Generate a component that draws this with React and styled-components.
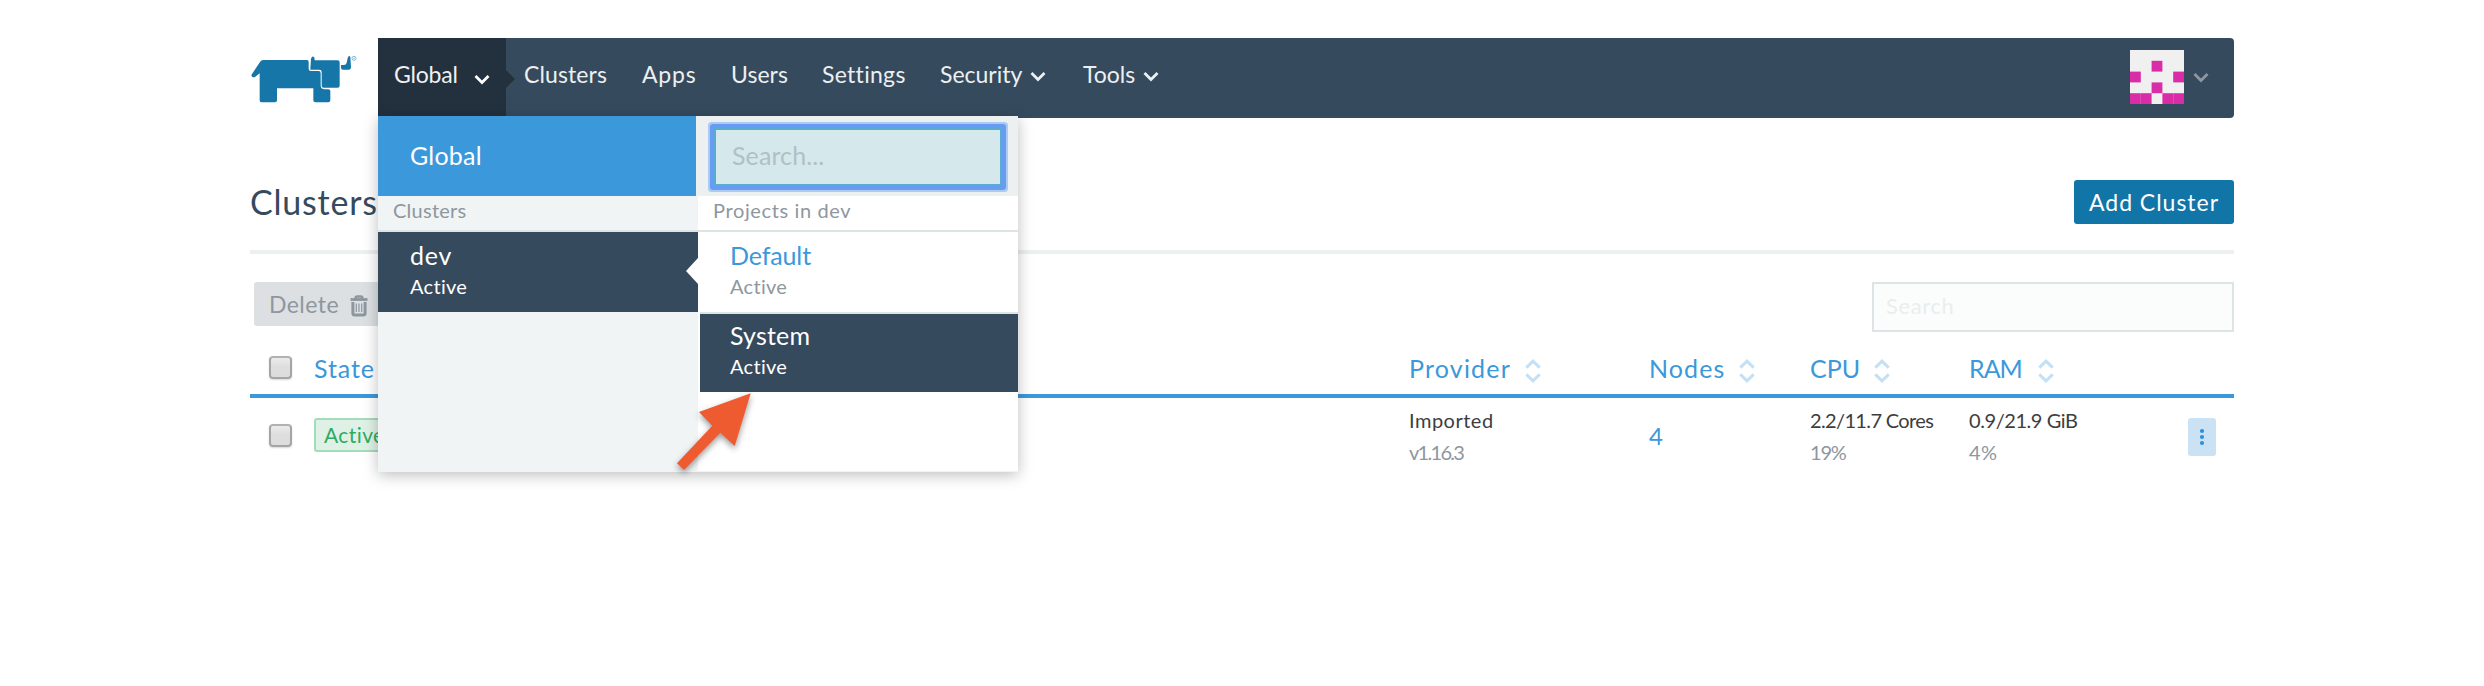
import React from 'react';
import styled, { createGlobalStyle } from 'styled-components';

const c = {
  navy: '#364a5e', navyDark: '#23303d', blue: '#3b98da', primary: '#1175a7',
  muted: '#8e979e', border: '#dce4e5', panel: '#f0f4f5', soft: '#ecf0f1', nav: '#ecf0f0',
};

const GlobalStyle = createGlobalStyle`
  * { box-sizing: border-box; }
  body { margin: 0; background: #fff; font-family: Lato, "Liberation Sans", sans-serif; overflow: hidden; }
`;

const Page = styled.div`
  width: 2484px;
  height: 686px;
  padding: 38px 250px 0;
`;

const Txt = styled.span`
  display: block;
  white-space: nowrap;
  font-size: ${p => p.$s}px;
  line-height: ${p => p.$lh || 32}px;
  letter-spacing: ${p => p.$ls || 0}px;
  color: ${p => p.$c || 'inherit'};
`;

const Header = styled.header`
  display: flex;
  height: 80px;
`;

const Logo = styled.div`
  width: 128px;
  padding-top: 12px;
  svg { display: block; margin-left: -4px; }
`;

const Bar = styled.nav`
  position: relative;
  flex: 1;
  display: flex;
  background: ${c.navy};
  border-radius: 0 4px 4px 0;
  color: ${c.nav};
`;

const Scope = styled.div`
  position: relative;
  display: flex;
  align-items: center;
  width: 128px;
  padding: 0 0 8px 16px;
  background: ${c.navyDark};
  color: #eef1f2;
  svg { margin: 11px 0 0 16px; }
  &::after {
    content: '';
    position: absolute;
    left: 128px;
    top: 32px;
    border: solid transparent;
    border-width: 9px 0 9px 9px;
    border-left-color: ${c.navyDark};
  }
`;

const NavItem = styled.div`
  display: flex;
  align-items: center;
  width: ${p => p.$w}px;
  padding-bottom: 8px;
  svg { margin: 5px 0 0 8px; }
`;

const NavItems = styled.div`
  display: flex;
  padding-left: 18px;
`;

const Account = styled.div`
  display: flex;
  align-items: center;
  margin-left: auto;
  padding: 0 25px 2px 0;
  gap: 9px;
  svg { display: block; }
`;

const Dropdown = styled.div`
  position: absolute;
  z-index: 5;
  top: 78px;
  left: 0;
  display: flex;
  width: 640px;
  height: 356px;
  background: ${c.panel};
  box-shadow: 0 3px 14px rgba(0, 0, 0, 0.26);
`;

const Column = styled.div`
  width: 320px;
  height: ${p => p.$h}px;
  background: ${p => p.$bg};
`;

const ScopeGlobal = styled.div`
  height: 80px;
  padding: 25px 0 0 32px;
  background: ${c.blue};
  color: #fff;
  border-right: 2px solid ${c.soft};
`;

const GroupLabel = styled.div`
  height: 36px;
  padding: 0 0 0 15px;
  border-bottom: 2px solid ${c.border};
  color: ${c.muted};
`;

const Entry = styled.div`
  position: relative;
  height: 80px;
  padding: 7px 0 0 32px;
  background: ${p => (p.$active ? c.navy : 'transparent')};
  color: ${p => (p.$active ? '#fff' : c.blue)};
`;

const ProjectEntry = styled(Entry)`
  ${p => p.$active && `
    margin-left: 2px;
    padding: 5px 0 0 30px;
    border-top: 2px solid ${c.border};
  `}
`;

const Pointer = styled.i`
  position: absolute;
  right: 0;
  top: 26px;
  border: solid transparent;
  border-width: 13px 12px 13px 0;
  border-right-color: #fff;
`;

const SearchWrap = styled.div`
  height: 80px;
  padding: 12px 16px 10px;
  background: ${c.soft};
`;

const ScopeSearch = styled.div`
  height: 58px;
  padding: 8px 0 0 16px;
  border: 2px solid #59abd1;
  background: #d5e8eb;
  color: #b1c0c5;
  box-shadow: 0 0 0 4px #669df3, 0 0 0 6px #adcbf1;
  border-radius: 1px;
`;

const Annotation = styled.svg`
  position: absolute;
  left: 282px;
  top: 268px;
  filter: drop-shadow(0 3px 3px rgba(0, 0, 0, 0.4));
`;

const TitleRow = styled.div`
  display: flex;
  justify-content: space-between;
  height: 136px;
  padding-top: 62px;
  border-bottom: 4px solid #ecf0f1;
  color: ${c.navy};
`;

const Button = styled.button`
  display: flex;
  align-items: center;
  height: 44px;
  padding: 0 15px;
  border: 0;
  border-radius: 3px;
  font-family: inherit;
  background: ${p => (p.$disabled ? '#dce0e3' : c.primary)};
  color: ${p => (p.$disabled ? c.muted : '#fff')};
  svg { margin: 3px 0 0 11px; }
`;

const Toolbar = styled.div`
  display: flex;
  justify-content: space-between;
  padding: 28px 0 0 4px;
`;

const TableSearch = styled.div`
  width: 362px;
  height: 50px;
  padding: 6px 0 0 12px;
  border: 2px solid ${c.border};
  background: #fbfdfc;
  color: #e9edee;
`;

const Row = styled.div`
  display: grid;
  grid-template-columns: 64px 1095px 240px 161px 159px 219px 46px;
  align-items: center;
  height: 76px;
`;

const HeadRow = styled(Row)`
  height: 66px;
  padding-top: 9px;
  border-bottom: 4px solid ${c.blue};
  color: ${c.blue};
`;

const HeadCell = styled.div`
  display: flex;
  align-items: center;
  svg { margin: 6px 0 0 ${p => p.$gap || 14}px; }
`;

const Checkbox = styled.div`
  width: 23px;
  height: 23px;
  margin: 0 0 1px 19px;
  border: 2px solid #a5a5a5;
  border-top-color: #b2b2b2;
  border-radius: 4px;
  background: linear-gradient(#ebebeb, #dedede 45%, #dcdcdc);
  box-shadow: 0 1px 2px rgba(0, 0, 0, 0.16);
`;

const Badge = styled.div`
  width: 82px;
  height: 34px;
  margin-bottom: 2px;
  padding-left: 8px;
  border: 2px solid #a3dcb9;
  border-radius: 3px;
  background: #dff1e6;
  color: #2fab60;
`;

const Kebab = styled.div`
  display: flex;
  justify-content: center;
  align-items: center;
  width: 28px;
  height: 38px;
  margin-top: 2px;
  border-radius: 3px;
  background: #cbe2f5;
`;

const NodeCount = styled.a`
  padding-bottom: 1px;
  color: ${c.blue};
`;

const Chevron = ({ color = c.nav }) => (
  <svg width="16" height="11" viewBox="0 0 16 11">
    <path d="M1.500 2 8 8.500 14.500 2" fill="none" stroke={color} strokeWidth="2.800" />
  </svg>
);

const SortIcon = () => (
  <svg width="16" height="24" viewBox="0 0 16 24">
    <path d="M1.300 8.700 8 2.200l6.700 6.500M1.300 15.300 8 21.800l6.700-6.500" fill="none" stroke="#c4e0f5" strokeWidth="3" />
  </svg>
);

const Trash = () => (
  <svg width="18" height="22" viewBox="0 0 18 22" fill="none" stroke={c.muted}>
    <path d="M0.500 4.500h17" strokeWidth="2.800" />
    <path d="M5.700 4V2.900q0-1.400 1.400-1.400h3.800q1.400 0 1.400 1.400V4" strokeWidth="2.600" />
    <path d="M2.900 7v11.300q0 1.800 1.800 1.800h8.600q1.800 0 1.800-1.800V7" strokeWidth="3" />
    <path d="M6.300 8.500v8.500M9 8.500v8.500M11.700 8.500v8.500" strokeWidth="1.200" />
  </svg>
);

const Steer = () => (
  <svg width="112" height="60" viewBox="0 0 336 180">
    <g fill="#1776a8">
      <path d="M16 75 42 36q4-6 10-6H183q5 0 5 6V56q0 7 7 7H218q6 0 6 6V106q0 12 12 12H247q6 0 6 5V151q0 6-6 6H208q-6 0-6-6V115H93V151q0 6-6 6H46q-5 0-5-6V70L28 80Q22 84 18 80Z" />
      <path d="M193 57 195 26q4-10 9-5 2 3 2 10H275q6 0 6 6V107q0 6-6 6H233q-6 0-6-6V66q0-7-7-7H193z" />
      <path d="M285 45H293q8 0 9-7L305 24q3-9 8-4l2 32q0 7-6 7H291q-6 0-6-6z" />
    </g>
    <circle cx="324" cy="25" r="6" fill="none" stroke="#6ba8c8" strokeWidth="2.400" />
    <circle cx="324" cy="25" r="2" fill="#6ba8c8" />
  </svg>
);

const cells = [[2, 1], [0, 2], [4, 2], [2, 3], [0, 4], [1, 4], [3, 4], [4, 4]];
const Avatar = () => (
  <svg width="54" height="54" viewBox="0 0 54 54">
    <rect width="54" height="54" fill="#f0f0f0" />
    {cells.map(([x, y]) => (
      <rect key={`${x}-${y}`} x={x * 10.8} y={y * 10.8} width="10.800" height="10.800" fill="#d92da8" />
    ))}
  </svg>
);

const navItems = [
  { t: 'Clusters', w: 118, ls: 0.1 },
  { t: 'Apps', w: 89, ls: 0.8 },
  { t: 'Users', w: 91, ls: 0.05 },
  { t: 'Settings', w: 118, ls: 0.3 },
  { t: 'Security', w: 143, ls: 0 },
  { t: 'Tools', w: 90, ls: 0 },
];
const withMenu = ['Security', 'Tools'];

const heads = [
  { t: 'State', ls: 0.9 },
  { t: 'Provider', ls: 1.2, sort: true },
  { t: 'Nodes', ls: 1.1, sort: true },
  { t: 'CPU', ls: 0, sort: true },
  { t: 'RAM', ls: -1, sort: true, gap: 16 },
];

const pairs = [
  [['2.2/11.7 Cores', -0.64], ['19%', -1.2]],
  [['0.9/21.9 GiB', -0.43], ['4%', 0.3]],
];

const Pair = ({ rows }) => (
  <div>
    <Txt $s={20} $ls={rows[0][1]} $c="#3d3d3d">{rows[0][0]}</Txt>
    <Txt $s={20} $ls={rows[1][1]} $c={c.muted}>{rows[1][0]}</Txt>
  </div>
);

function ScopeMenu() {
  return (
    <Dropdown>
      <Column $bg={c.panel} $h={356}>
        <ScopeGlobal><Txt $s={25} $ls={0.2} $lh={28}>Global</Txt></ScopeGlobal>
        <GroupLabel><Txt $s={20} $ls={0.25} $lh={29}>Clusters</Txt></GroupLabel>
        <Entry $active>
          <Txt $s={25} $ls={0.8}>dev</Txt>
          <Txt $s={20} $ls={0.3} $lh={30}>Active</Txt>
          <Pointer />
        </Entry>
      </Column>
      <Column $bg="#fff" $h={355}>
        <SearchWrap><ScopeSearch><Txt $s={25} $ls={0.1} $lh={34}>Search...</Txt></ScopeSearch></SearchWrap>
        <GroupLabel><Txt $s={20} $ls={0.62} $lh={29}>Projects in dev</Txt></GroupLabel>
        <ProjectEntry>
          <Txt $s={25} $ls={-0.12}>Default</Txt>
          <Txt $s={20} $ls={0.3} $lh={30} $c={c.muted}>Active</Txt>
        </ProjectEntry>
        <ProjectEntry $active>
          <Txt $s={25} $ls={0.2}>System</Txt>
          <Txt $s={20} $ls={0.3} $lh={30}>Active</Txt>
        </ProjectEntry>
      </Column>
      <Annotation width="100" height="96" viewBox="660 384 100 96">
        <path d="M750.700 393.300 734.700 446 720.300 432.700 684 470 677 463.300 712.300 425.700 699 412z" fill="#ef5b30" />
      </Annotation>
    </Dropdown>
  );
}

export default function App() {
  return (
    <Page>
      <GlobalStyle />
      <Header>
        <Logo><Steer /></Logo>
        <Bar>
          <Scope>
            <Txt $s={23} $ls={-0.2}>Global</Txt>
            <Chevron color="#fff" />
          </Scope>
          <NavItems>
            {navItems.map(n => (
              <NavItem key={n.t} $w={n.w}>
                <Txt $s={23} $ls={n.ls}>{n.t}</Txt>
                {withMenu.includes(n.t) && <Chevron />}
              </NavItem>
            ))}
          </NavItems>
          <Account><Avatar /><Chevron color={c.muted} /></Account>
          <ScopeMenu />
        </Bar>
      </Header>

      <TitleRow>
        <Txt $s={34} $ls={0.8} $lh={44}>Clusters</Txt>
        <Button><Txt $s={23} $ls={0.98}>Add Cluster</Txt></Button>
      </TitleRow>

      <Toolbar>
        <Button $disabled><Txt $s={23} $ls={0.45}>Delete</Txt><Trash /></Button>
        <TableSearch><Txt $s={22} $ls={0.6}>Search</Txt></TableSearch>
      </Toolbar>

      <HeadRow>
        <Checkbox />
        {heads.map(h => (
          <HeadCell key={h.t} $gap={h.gap}>
            <Txt $s={25} $ls={h.ls}>{h.t}</Txt>
            {h.sort && <SortIcon />}
          </HeadCell>
        ))}
      </HeadRow>

      <Row>
        <Checkbox />
        <Badge><Txt $s={21} $ls={0.4} $lh={30}>Active</Txt></Badge>
        <Pair rows={[['Imported', 0.5], ['v1.16.3', -1.7]]} />
        <NodeCount><Txt $s={24} $lh={34}>4</Txt></NodeCount>
        {pairs.map(p => <Pair key={p[0][0]} rows={p} />)}
        <Kebab>
          <svg width="6" height="18" viewBox="0 0 6 18" fill="#2b91da">
            <circle cx="3" cy="3" r="2.100" /><circle cx="3" cy="9" r="2.100" /><circle cx="3" cy="15" r="2.100" />
          </svg>
        </Kebab>
      </Row>
    </Page>
  );
}
